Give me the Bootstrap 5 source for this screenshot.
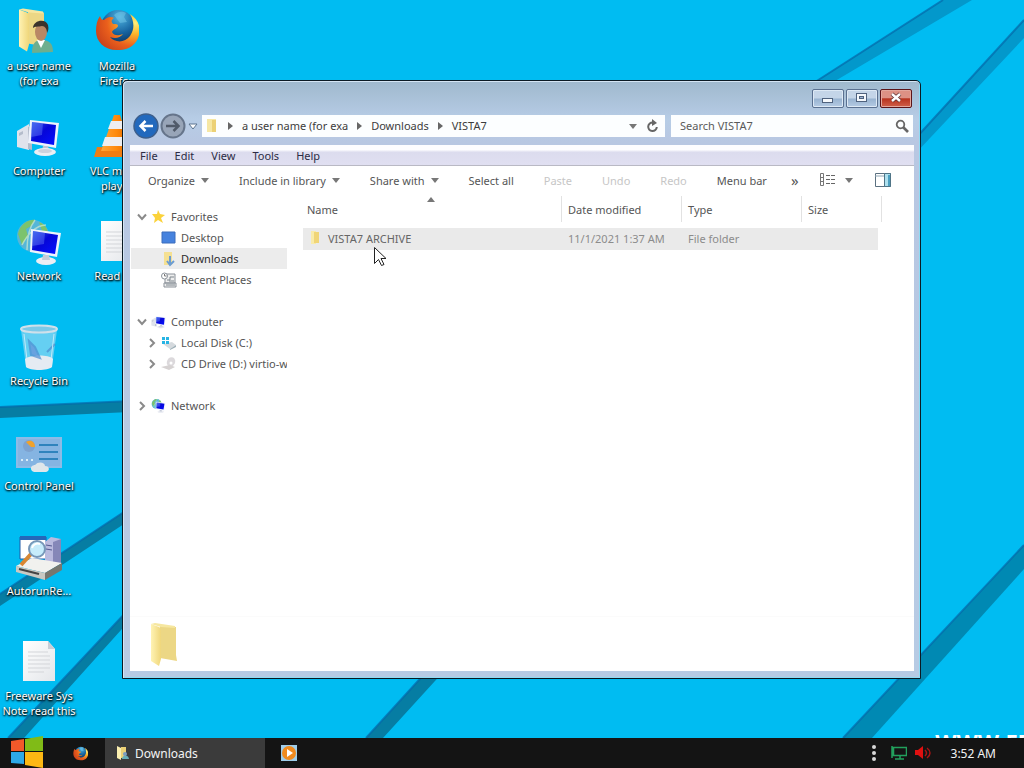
<!DOCTYPE html>
<html lang="en">
<head>
<meta charset="utf-8">
<meta name="viewport" content="width=device-width, initial-scale=1">
<title>Downloads</title>
<link href="https://cdn.jsdelivr.net/npm/bootstrap@5.3.0/dist/css/bootstrap.min.css" rel="stylesheet">
<script src="https://cdn.jsdelivr.net/npm/bootstrap@5.3.0/dist/js/bootstrap.bundle.min.js"></script>
<style>
  body { font: 11px/15px "Noto Sans", "Open Sans", sans-serif; background: #00bcf2; color: #555; }
  button, input { font: inherit; }
  button { border: 0; background: none; padding: 0; color: inherit; }
  a { color: inherit; text-decoration: none; }
  svg { display: block; flex: none; }

  .wallpaper { inset: 0; }
  .watermark { right: -8px; bottom: -15px; font: bold 22px/24px "Open Sans", sans-serif; color: #fff; }

  .shortcuts { display: grid; grid-auto-flow: column; grid-template-rows: repeat(auto-fill, 105px); grid-auto-columns: 78px; height: 100%; }
  .shortcut { padding-top: 7px; color: #fff; text-align: center; text-shadow: 1px 1px 2px #000, 0 1px 2px #000; }
  .shortcut svg { margin: 0 auto 3px; }
  .shortcut span { display: block; padding: 0 1px; }

  .explorer { left: 122px; right: 103px; top: 80px; bottom: 59px; padding: 0 6px 7px 7px; border: 1px solid #0b1a24; border-radius: 5px 5px 0 0;
    background: linear-gradient(#9fb9cd, #b3c9e2 32px, #b7cde6 38px, #b8c7e2 62px, #b7cbe4); box-shadow: inset 1px 1px #d4e5f4, inset -1px -1px #8fdcf4; }
  .titlebar { height: 32px; padding: 8px 2px 0 0; gap: 2px; }
  .caption { width: 32px; height: 19px; border: 1px solid #5a7090; border-radius: 2px; background: linear-gradient(#c4d5e8 48%, #98b3d0 52%, #b5cbe4); box-shadow: inset 0 0 0 1px #dde9f5; }
  .caption-close { border-color: #5c1418; background: linear-gradient(#dd9184 45%, #b8341f 52%, #d0604a); box-shadow: inset 0 0 0 1px #e3a79c; }
  .addressrow { height: 26px; padding: 0 1px 0 3px; gap: 1px; }
  .path, .finder { height: 22px; background: #fcfeff; }
  .path { margin-left: 2px; padding: 0 6px 0 4px; gap: 9px; color: #3c3c3c; }
  .path a { padding-bottom: 2px; }
  .finder { margin-left: 5px; width: 242px; padding-right: 4px; }
  .finder input { border: 0; outline: 0; background: none; min-width: 0; padding: 0 9px 2px; color: #555; }
  .finder input::placeholder { color: #5a5a5a; opacity: 1; }
  .menus { margin-top: 6px; height: 21px; padding: 0 10px; gap: 17px; color: #2c2c44; border-bottom: 1px solid #b9b9c4; background: linear-gradient(#fdfdff 24%, #dcdcee 36%, #e0dff1); }
  .client { background: #fff; min-height: 0; }
  .tools { height: 30px; padding: 0 23px 2px 18px; gap: 30px; }
  .tools button { display: flex; align-items: center; gap: 6px; white-space: nowrap; }
  .tools button:disabled { color: #c6c6c6; }
  .tools .overflow-mark { margin-left: -6px; margin-right: -10px; font-size: 15px; }
  .tools .views { gap: 10px; margin-right: -10px; }
  .folders { width: 157px; padding: 10px 0 0 1px; }
  .folders a { display: flex; align-items: center; height: 21px; padding-left: 6px; white-space: nowrap; overflow: hidden; gap: 4px; }
  .folders a svg + svg { margin-right: 1px; }
  .folders .inner { padding-left: 16px; }
  .folders .leaf { padding-left: 30px; }
  .folders .group + .group { margin-top: 21px; }
  .folders .current { background: #ececec; color: #2b2b2b; }
  .listing { padding-left: 16px; }
  .files { width: 579px; table-layout: fixed; border-collapse: separate; border-spacing: 0; }
  .files th { height: 26px; font-weight: 400; padding: 1px 6px 0 6px; border-right: 1px solid #e2e2e2; position: relative; }
  .files th:first-child, .files td:first-child { padding-left: 4px; }
  .files tbody::before { content: ""; display: block; height: 6px; }
  .files td { height: 22px; padding: 0 6px 2px; background: #eaeaea padding-box; color: #8c8c8c; white-space: nowrap; }
  .files td:first-child { color: #666; }
  .files td:last-child { border-right: 4px solid transparent; }
  .sortmark { left: 124px; top: 1px; }
  .details { height: 55px; padding: 5px 18px; border-top: 1px solid #fbfbfb; }
  .pointer { left: 373px; top: 246px; }

  .taskbar { height: 30px; background: #141414; color: #f4f4f4; font-size: 12px; }
  .start { margin: -3px 0 0 10px; }
  .task { width: 160px; height: 30px; background: #3b3b3b; padding-left: 11px; gap: 6px; }
  .tray { margin-right: 28px; gap: 8px; }
  .tray time { margin-left: 12px; }
</style>
</head>
<body class="vh-100 d-flex flex-column overflow-hidden">

<svg width="0" height="0" class="position-absolute" aria-hidden="true">
  <defs>
    <linearGradient id="gBlue" x1="0" x2="1" y1="0" y2="1"><stop offset="0" stop-color="#2a55e8"/><stop offset=".45" stop-color="#0606d8"/><stop offset="1" stop-color="#0410ff"/></linearGradient>
    <linearGradient id="gFold" x1="0" x2="1"><stop offset="0" stop-color="#fff3b4"/><stop offset="1" stop-color="#efd67a"/></linearGradient>
    <linearGradient id="gPage" x1="0" x2="1" y1="0" y2="1"><stop offset="0" stop-color="#fff"/><stop offset="1" stop-color="#e4e6ea"/></linearGradient>
    <radialGradient id="gFox" cx=".9" cy=".25" r="1"><stop offset="0" stop-color="#fff07a"/><stop offset=".3" stop-color="#fbb52a"/><stop offset=".65" stop-color="#ea5f1c"/><stop offset="1" stop-color="#c8401b"/></radialGradient>
    <radialGradient id="gSea" cx=".55" cy=".2" r=".8"><stop offset="0" stop-color="#4fb4e2"/><stop offset=".6" stop-color="#16639f"/><stop offset="1" stop-color="#0c3461"/></radialGradient>
    <linearGradient id="gCone" x1="0" x2="1"><stop offset="0" stop-color="#ffa63a"/><stop offset=".5" stop-color="#ff8a0c"/><stop offset="1" stop-color="#d96200"/></linearGradient>
    <symbol id="folder" viewBox="0 0 30 46"><path d="M10 4 26 5v28l1 6-17-3z" fill="#ecd785"/><path d="M1 2 9 5c3 2 2 5 2 9v23l-2 7-8-5z" fill="url(#gFold)"/><path d="M1 2 5 1l20 3v2L11 5z" fill="#f6e7a0"/></symbol>
    <symbol id="screen" viewBox="0 0 44 40"><path d="M1 14 13 7v26L1 30z" fill="#dfe3ec"/><path d="M3 16 7 14v3l-4 2zM12 10v22l4 1V8z" fill="#b4bccb"/><path d="M14 3 43 6 40 31 12 26z" fill="#eef2fb"/><path d="M16 5 40 8 38 28 15 24z" fill="url(#gBlue)"/><path d="M16 5 27 6 26 18 15 20z" fill="#7f9bff" opacity=".35"/><path d="M27 29h5l1 4h-7z" fill="#bfc6d6"/><ellipse cx="29" cy="35" rx="11" ry="4" fill="#eceef4"/><ellipse cx="29" cy="34" rx="7" ry="2" fill="#cdd2de"/></symbol>
    <symbol id="globe" viewBox="0 0 48 48"><circle cx="18" cy="19" r="16" fill="#55b6d8"/><path d="M3 17C5 7 14 2 20 3l-4 6-5 3 2 7-6 9zM24 5c6 2 9 7 9 12l-6-3z" fill="#7cc36c"/><path d="M7 28c5-10 14-20 24-20M12 33C12 18 16 8 20 3" stroke="#cfe9d0" stroke-width="1.500" fill="none" opacity=".7"/><path d="M16 12 46 16 42 40 15 35z" fill="#eef2fb"/><path d="M18 14 43 18 40 37 17 33z" fill="url(#gBlue)"/><path d="M18 14 30 16 29 27 17 29z" fill="#7f9bff" opacity=".35"/><ellipse cx="31" cy="44" rx="10" ry="4" fill="#eceef4"/><path d="M28 38h6l1 5h-8z" fill="#c5cbd8"/></symbol>
    <symbol id="firefox" viewBox="0 0 44 44"><circle cx="23" cy="19" r="17" fill="url(#gSea)"/><path d="M19 7c4-4 9-4 12-2l-2 4 3 5-7 1z" fill="#76c8e8" opacity=".5"/><path d="M5 8c1 3 2 4 4 4 3-3 7-4 10-2-3 2-3 4-1 6 3 0 5 0 5 2-1 3-5 3-6 6 2 4 6 4 11 2-3 4-8 5-13 3 5 6 15 6 20-1 5-7 4-15 0-22 8 5 11 13 9 21-2 9-10 15-20 15C10 43 1 34 1 23 1 17 2 12 5 8z" fill="url(#gFox)"/></symbol>
    <symbol id="page" viewBox="0 0 34 42"><path d="M1 1h25l7 8v32H1z" fill="url(#gPage)"/><path d="M26 1v8h7z" fill="#c9ced6"/><path d="M6 12h20M6 16h22M6 20h22M6 24h22M6 28h22M6 32h16" stroke="#d3d5d9" stroke-width="1"/></symbol>
    <symbol id="down" viewBox="0 0 8 5"><path d="M0 0h8L4 5z" fill="#777"/></symbol>
    <symbol id="right" viewBox="0 0 5 8"><path d="M0 0v8l5-4z" fill="#666"/></symbol>
    <symbol id="open" viewBox="0 0 10 8"><path d="M1 1.500l4 4.500 4-4.500" stroke="#8a8a8a" stroke-width="2" fill="none"/></symbol>
    <symbol id="shut" viewBox="0 0 10 10"><path d="M3 1l4 4-4 4" stroke="#8a8a8a" stroke-width="2" fill="none"/></symbol>
  </defs>
</svg>

<main class="flex-grow-1 position-relative overflow-hidden">
  <svg class="wallpaper position-absolute w-100 h-100" viewBox="0 0 1024 738" preserveAspectRatio="none" aria-hidden="true">
    <path d="M0 407 130 401v11L0 418zM130 508 0 594v12l130-86zM130 608 8 738h16l106-118zM428 670 366 738h17l62-68z" fill="#067da3"/>
    <path d="M1024 545 843 738h29l152-169z" fill="#0089b3"/>
    <path d="M943 0 812 84h18L972 0zM1024 20 915 139v15L1024 38z" fill="#0398cb"/>
    <path d="M0 407 130 401M130 508 0 594M130 608 8 738M428 670 366 738M1024 545 843 738M943 0 812 84M1024 20 915 139" stroke="#0568a8" stroke-width="2" opacity=".7"/>
  </svg>
  <div class="watermark position-absolute">WWW.FR</div>

  <nav class="shortcuts position-relative" aria-label="Desktop">
    <a href="#" class="shortcut"><svg width="44" height="48"><use href="#folder" x="1" y="0" width="30" height="47"/><path d="M15 46c0-9 3-13 9-13 8 0 12 3 12 12z" fill="#6fae8e"/><path d="M20 33l4 8 4-8z" fill="#fff"/><ellipse cx="24" cy="25" rx="6" ry="9" fill="#b98865"/><path d="M16 21c0-8 13-10 15-3 1 4 0 6-1 8 0-4-2-7-5-7-4 1-7 0-9 2z" fill="#3b332c"/></svg><span>a user name (for exa</span></a>
    <a href="#" class="shortcut"><svg width="48" height="48"><use href="#screen" x="1" y="5" width="44" height="40"/></svg><span>Computer</span></a>
    <a href="#" class="shortcut"><svg width="48" height="48"><use href="#globe" width="48" height="48"/></svg><span>Network</span></a>
    <a href="#" class="shortcut"><svg width="48" height="48"><path d="M6 8h36l-5 36c-2 4-24 4-26 0z" fill="#a8dcf2" opacity=".6"/><path d="M10 37c4-4 23-5 28 0l-1 8c-4 4-22 4-26 0z" fill="#e5ebf2"/><path d="M14 19l2 14 9 3-5-11zM32 30l8-8" stroke="#4d8cd0" stroke-width="2" fill="#6a8fd8" opacity=".7"/><path d="M9 12l3 26M39 12l-3 26" stroke="#d8f1fb" stroke-width="1" opacity=".8"/><ellipse cx="24" cy="7" rx="18" ry="3.500" fill="#7cc9e8" stroke="#cfe0ea" stroke-width="2"/></svg><span>Recycle Bin</span></a>
    <a href="#" class="shortcut"><svg width="48" height="48"><path d="M1 10h46v31H1z" fill="#8dbbe6"/><path d="M3 12h42v27H3z" fill="#85b4e2"/><circle cx="14" cy="19" r="6" fill="#7da2cf"/><path d="M11 15c5-3 9 0 9 5h-4z" fill="#f0a22c"/><path d="M24 18h19M24 25h19M24 32h19" stroke="#2f83bd" stroke-width="2"/><path d="M6 33h15" stroke="#d9ecf8" stroke-width="2" stroke-dasharray="2 3"/><path d="M17 44c-3-4 1-6 3-6 3-4 10-3 10 1 5 0 5 5 1 6H19z" fill="#dfe6ea"/></svg><span>Control Panel</span></a>
    <a href="#" class="shortcut"><svg width="48" height="48"><path d="M5 5h26v22H5z" fill="#fff" stroke="#1f5ba8"/><path d="M5 4h26v4H5z" fill="#2567b8"/><path d="M30 10l6-5 10 2v24l-8 3-8-2z" fill="#b9bade"/><path d="M38 10l8-3v24l-8 3z" fill="#8587b8"/><path d="M31 13l6 1M31 17l6 1" stroke="#545a90"/><path d="M1 34l16-8 30 5-17 10z" fill="#f1f1ee"/><path d="M1 34l29 7v7L1 40z" fill="#c9c9c3"/><path d="M30 41l17-10v7L30 48z" fill="#77776f"/><path d="M4 37l20 5" stroke="#444" stroke-width="2"/><path d="M6 33l10-11" stroke="#d88732" stroke-width="4"/><circle cx="22" cy="17" r="8" fill="#c6ecfb" stroke="#7797b8" stroke-width="2"/><path d="M17 16c1-4 5-5 8-4" stroke="#fff" stroke-width="2" fill="none"/></svg><span>AutorunRe...</span></a>
    <a href="#" class="shortcut"><svg width="48" height="48"><use href="#page" x="7" y="3" width="34" height="42"/></svg><span>Freeware Sys Note read this</span></a>
    <a href="#" class="shortcut"><svg width="48" height="48"><use href="#firefox" x="2" y="1" width="44" height="44"/></svg><span>Mozilla<br>Firefox</span></a>
    <a href="#" class="shortcut"><svg width="48" height="48"><path d="M4 35l38 1 5 9H1z" fill="#f07d12"/><path d="M21 3h6l12 36H8z" fill="url(#gCone)"/><path d="M18 9h11l3 8H15zM12 25h23l3 9H9z" fill="#eeeef0"/></svg><span>VLC media player</span></a>
    <a href="#" class="shortcut"><svg width="48" height="48"><use href="#page" x="7" y="3" width="34" height="42"/></svg><span>Read me</span></a>
  </nav>

  <section class="explorer position-absolute d-flex flex-column" aria-label="VISTA7">
    <header class="titlebar d-flex justify-content-end">
      <button class="caption" aria-label="Minimize"><svg width="30" height="17"><rect x="9.500" y="8.500" width="10" height="4" fill="#f4f8fc" stroke="#4f627e"/></svg></button>
      <button class="caption" aria-label="Maximize"><svg width="30" height="17"><rect x="9.500" y="3.500" width="10" height="8" fill="#f4f8fc" stroke="#4f627e"/><rect x="12.500" y="6.500" width="4" height="2" fill="#9cb4d2" stroke="#4f627e"/></svg></button>
      <button class="caption caption-close" aria-label="Close"><svg width="30" height="17"><path d="M11 4l8 7M19 4l-8 7" stroke="#5d3030" stroke-width="4"/><path d="M11 4l8 7M19 4l-8 7" stroke="#fff" stroke-width="2.500"/></svg></button>
    </header>
    <div class="addressrow d-flex align-items-center">
      <button aria-label="Back"><svg width="26" height="26"><circle cx="13" cy="13" r="12" fill="#2269bd" stroke="#3d5f8c" stroke-width="1.500"/><path d="M20 13H8M12.500 8l-5 5 5 5" fill="none" stroke="#fff" stroke-width="2.500"/></svg></button>
      <button aria-label="Forward"><svg width="26" height="26"><circle cx="13" cy="13" r="11.500" fill="#98a5b8" stroke="#66758b" stroke-width="2"/><path d="M6 13h12M13.500 8l5 5-5 5" fill="none" stroke="#505a69" stroke-width="2.500"/></svg></button>
      <button aria-label="Recent pages"><svg width="12" height="10"><path d="M2 3h8L6 8z" fill="#fff" stroke="#5d7590"/></svg></button>
      <nav class="path flex-grow-1 d-flex align-items-center" aria-label="Address">
        <svg width="13" height="16"><path d="M1 1h9v13H1z" fill="#f6e7a4"/><path d="M6 2h4v12H6z" fill="#ecd176"/></svg>
        <svg width="5" height="8"><use href="#right"/></svg><a href="#">a user name (for exa</a>
        <svg width="5" height="8"><use href="#right"/></svg><a href="#">Downloads</a>
        <svg width="5" height="8"><use href="#right"/></svg><a href="#">VISTA7</a>
        <button class="ms-auto" aria-label="Previous locations"><svg width="8" height="5"><use href="#down"/></svg></button>
        <button aria-label="Refresh"><svg width="13" height="14"><path d="M7 3.500A4.300 4.300 0 1 0 10.800 8" fill="none" stroke="#666" stroke-width="2"/><path d="M6 0v7l5-3z" fill="#666"/></svg></button>
      </nav>
      <div class="finder d-flex align-items-center">
        <input class="flex-grow-1" type="text" placeholder="Search VISTA7" aria-label="Search VISTA7">
        <button aria-label="Search"><svg width="14" height="14"><circle cx="5.500" cy="5.500" r="3.800" fill="none" stroke="#666" stroke-width="1.800"/><path d="M8 8l5 5" stroke="#666" stroke-width="2.600"/></svg></button>
      </div>
    </div>
    <div class="menus d-flex align-items-center"><button>File</button><button>Edit</button><button>View</button><button>Tools</button><button>Help</button></div>
    <div class="client flex-grow-1 d-flex flex-column">
      <div class="tools d-flex align-items-center">
        <button>Organize <svg width="8" height="5"><use href="#down"/></svg></button>
        <button>Include in library <svg width="8" height="5"><use href="#down"/></svg></button>
        <button>Share with <svg width="8" height="5"><use href="#down"/></svg></button>
        <button>Select all</button>
        <button disabled>Paste</button><button disabled>Undo</button><button disabled>Redo</button>
        <button>Menu bar</button>
        <button class="overflow-mark">»</button>
        <button class="views" aria-label="Change view"><svg width="16" height="14"><path d="M1.500.5h3v12h-3zM1 4.500h4M1 8.500h4" stroke="#777" fill="none"/><path d="M7 2.500h9M7 6.500h9M7 10.500h9" stroke="#666" stroke-dasharray="4 1"/></svg><svg width="8" height="5"><use href="#down"/></svg></button>
        <button class="ms-auto" aria-label="Show preview pane"><svg width="16" height="14"><path d="M.5.5h15v13H.5z" fill="#fff" stroke="#5b7080"/><path d="M0 3h10" stroke="#8fa5b3"/><path d="M9.500.5h6v13h-6z" fill="#aee0ee" stroke="#4f7486"/><path d="M13 2h2v11h-2z" fill="#4b9fc0"/></svg></button>
      </div>
      <div class="flex-grow-1 d-flex">
        <nav class="folders" aria-label="Folders">
          <div class="group">
            <a href="#"><svg width="10" height="8"><use href="#open"/></svg><svg width="15" height="15"><path d="M7 1l2 4 5 1-4 3 2 5-5-3-4 3 1-5-3-4 5 0z" fill="#fbd23a"/></svg>Favorites</a>
            <a href="#" class="leaf"><svg width="16" height="14"><path d="M1 1h13v11H1z" fill="#4682de" stroke="#3a6cbc"/></svg>Desktop</a>
            <a href="#" class="leaf current"><svg width="16" height="16"><path d="M3 1h8v13H3z" fill="#f5e092"/><path d="M9 5v8M6 10l3 4 4-4" stroke="#6c9cd0" stroke-width="2" fill="none"/></svg>Downloads</a>
            <a href="#" class="leaf"><svg width="16" height="16"><path d="M4 2h10v9H4zM3 11h12v4H3z" fill="#eee" stroke="#8a9199"/><path d="M6 8h3V5h4M8 9h5M5 13h9" stroke="#7a848c" fill="none"/><circle cx="3.500" cy="4" r="3" fill="#fff" stroke="#8a9199"/><path d="M3.500 2v2h2" stroke="#777" fill="none"/></svg>Recent Places</a>
          </div>
          <div class="group">
            <a href="#"><svg width="10" height="8"><use href="#open"/></svg><svg width="15" height="14"><use href="#screen"/></svg>Computer</a>
            <a href="#" class="inner"><svg width="10" height="10"><use href="#shut"/></svg><svg width="15" height="14"><path d="M2 8l9-2 4 3-6 4z" fill="#d5dade"/><path d="M9 13l6-4v2l-6 3z" fill="#9fb0b8"/><path d="M1 1h3v3H1zM5 1h3v3H5zM1 5h3v3H1zM5 5h3v3H5z" fill="#27b4e4"/></svg>Local Disk (C:)</a>
            <a href="#" class="inner"><svg width="10" height="10"><use href="#shut"/></svg><svg width="15" height="14"><ellipse cx="10" cy="5" rx="4" ry="5" fill="#dcd9dc" transform="rotate(25 10 5)"/><path d="M0 10l9-2 5 2-6 3z" fill="#d6d2d2"/><circle cx="10" cy="6" r="1.500" fill="#fff"/></svg>CD Drive (D:) virtio-w</a>
          </div>
          <div class="group">
            <a href="#"><svg width="10" height="10"><use href="#shut"/></svg><svg width="15" height="15"><use href="#globe"/></svg>Network</a>
          </div>
        </nav>
        <div class="listing flex-grow-1">
          <table class="files">
            <colgroup><col style="width:259px"><col style="width:120px"><col style="width:120px"><col style="width:80px"></colgroup>
            <thead><tr><th>Name<svg class="sortmark position-absolute" width="8" height="5"><path d="M0 5h8L4 0z" fill="#777"/></svg></th><th>Date modified</th><th>Type</th><th>Size</th></tr></thead>
            <tbody><tr><td><div class="d-flex align-items-center"><svg class="me-1" width="17" height="16"><path d="M4 1h5v13H4z" fill="#f9eba9"/><path d="M7 2h5v11H7z" fill="#f0d577"/></svg>VISTA7 ARCHIVE</div></td><td>11/1/2021 1:37 AM</td><td>File folder</td><td></td></tr></tbody>
          </table>
        </div>
      </div>
      <footer class="details"><svg width="34" height="46"><use href="#folder" width="34" height="46"/></svg></footer>
    </div>
  </section>
  <svg class="pointer position-absolute" width="14" height="21" aria-hidden="true"><path d="M1.500 1.500v16l4-4 3 6 2.500-1-3-6h5z" fill="#fff" stroke="#222"/></svg>
</main>

<footer class="taskbar position-relative d-flex align-items-center">
  <button class="start" aria-label="Start"><svg width="34" height="32"><path d="M1 5l13-2v12H1z" fill="#f1592a"/><path d="M15 3l18-3v15H15z" fill="#80bb17"/><path d="M1 16h13v12L1 27z" fill="#2ea9e8"/><path d="M15 16h18v16l-18-3z" fill="#fdb813"/></svg></button>
  <button class="ms-4" aria-label="Firefox"><svg width="29" height="16"><use href="#firefox" x="5" y="1" width="15" height="15"/></svg></button>
  <button class="task d-flex align-items-center ms-2"><svg width="13" height="16"><path d="M1 1l4 2v12l-4-2z" fill="#fbefb0"/><path d="M5 2h5v11H5z" fill="#ecd176"/><path d="M6 14c0-4 6-5 7 0z" fill="#69aeb8"/><circle cx="9" cy="9" r="2" fill="#7a9cc0"/></svg>Downloads</button>
  <button class="ms-3" aria-label="Media Player"><svg width="16" height="16"><path d="M0 0h16v16H0z" fill="#9fcdea"/><circle cx="8" cy="8" r="7" fill="#ef8a1e"/><path d="M6 4v8l6-4z" fill="#fff"/></svg></button>
  <div class="tray ms-auto d-flex align-items-center">
    <button class="me-1" aria-label="Show hidden icons"><svg width="10" height="18"><circle cx="5" cy="3" r="2" fill="#d8d8d8"/><circle cx="5" cy="9" r="2" fill="#d8d8d8"/><circle cx="5" cy="15" r="2" fill="#d8d8d8"/></svg></button>
    <button aria-label="Network"><svg width="16" height="14"><path d="M2.500 1.500h13v8h-13zM9 10v3M4 13h9M1 0v12" stroke="#22a05c" stroke-width="1.500" fill="none"/></svg></button>
    <button aria-label="Volume"><svg width="16" height="14"><path d="M0 4h3l5-4v13l-5-4H0z" fill="#e01010"/><path d="M10 4c2 2 2 4 0 6M12 2c4 3 4 7 0 10" stroke="#a81414" stroke-width="1.500" fill="none"/></svg></button>
    <time>3:52 AM</time>
  </div>
</footer>
</body>
</html>
